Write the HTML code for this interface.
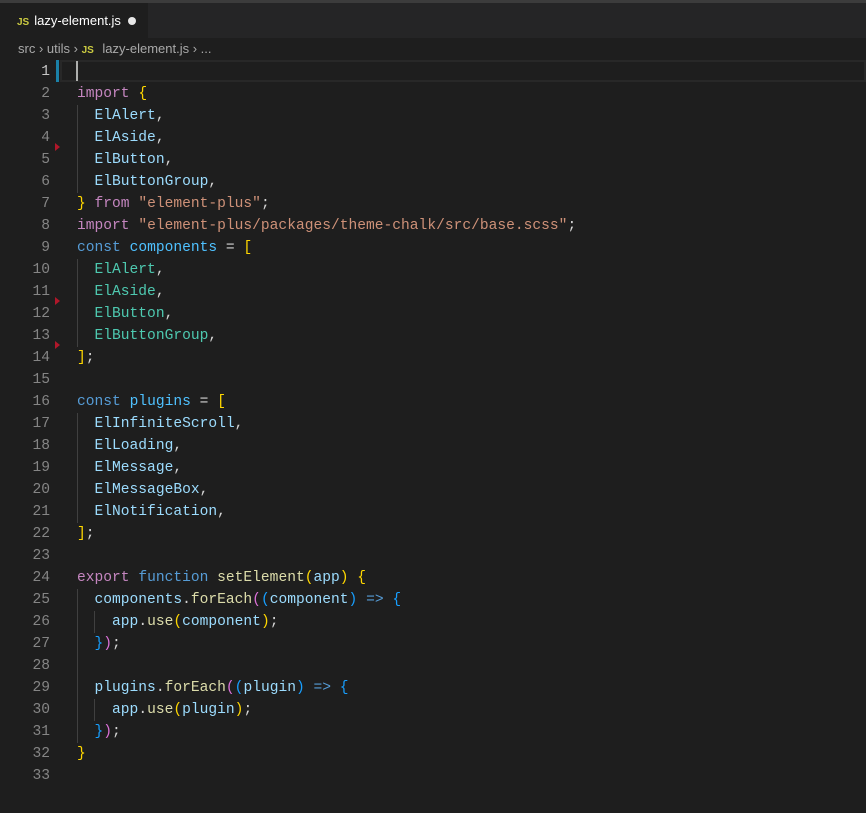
<!DOCTYPE html>
<html><head><meta charset="utf-8"><style>
*{margin:0;padding:0;box-sizing:border-box}
body{width:866px;height:813px;background:#1e1e1e;overflow:hidden;position:relative;font-family:"Liberation Sans",sans-serif}
.top{position:absolute;left:0;top:0;width:866px;height:3px;background:#3c3c3c}
.tabs{position:absolute;left:0;top:3px;width:866px;height:35px;background:#252526}
.tab{position:absolute;left:0;top:0;width:148px;height:35px;background:#1e1e1e;color:#fff;font-size:13px;line-height:35px;padding-left:17px}
.js{color:#cbcb41;font-weight:bold;font-size:10px;margin-right:5px;letter-spacing:0}
.dot{position:absolute;left:128px;top:14px;width:8px;height:8px;border-radius:50%;background:#e8e8e8}
.bc{position:absolute;left:18px;top:40px;color:#a9a9a9;font-size:13px;line-height:18px}
.bc .js{font-size:10px}
.code{position:absolute;left:0;top:61px;font-family:"Liberation Mono",monospace;font-size:14.6px;line-height:22px;white-space:pre}
.ln{position:absolute;left:0;width:50px;text-align:right;color:#858585}
.tx{position:absolute;left:77px;color:#d4d4d4}
.cur{position:absolute;left:60px;top:60px;width:806px;height:22px;border:2px solid #282828}
.k{color:#c586c0}.b{color:#569cd6}.v{color:#9cdcfe}.c{color:#4fc1ff}.t{color:#4ec9b0}.s{color:#ce9178}.f{color:#dcdcaa}.y{color:#ffd700}.p{color:#da70d6}.q{color:#179fff}
.g{position:absolute;width:1px;background:#404040}
.tri{position:absolute;left:55px;width:0;height:0;border-top:4px solid transparent;border-bottom:4px solid transparent;border-left:5px solid #b0172a}
</style></head><body>
<div class="top"></div>
<div class="tabs"><div class="tab"><span class="js">JS</span>lazy-element.js<div class="dot"></div></div></div>
<div class="bc">src › utils › <span class="js">JS</span> lazy-element.js › ...</div>
<div class="cur"></div>
<div style="position:absolute;left:56px;top:60px;width:3px;height:22px;background:#1b81a8"></div>
<div style="position:absolute;left:76px;top:61px;width:2px;height:20px;background:#aeafad"></div>
<div class="tri" style="top:143px"></div>
<div class="tri" style="top:297px"></div>
<div class="tri" style="top:341px"></div>
<div class="g" style="left:77px;top:105px;height:88px"></div>
<div class="g" style="left:77px;top:259px;height:88px"></div>
<div class="g" style="left:77px;top:413px;height:110px"></div>
<div class="g" style="left:77px;top:589px;height:154px"></div>
<div class="g" style="left:94px;top:611px;height:22px"></div>
<div class="g" style="left:94px;top:699px;height:22px"></div>
<div class="code">
<div class="ln" style="top:0;color:#c6c6c6">1</div>
<div class="ln" style="top:22px">2</div><div class="ln" style="top:44px">3</div><div class="ln" style="top:66px">4</div><div class="ln" style="top:88px">5</div><div class="ln" style="top:110px">6</div><div class="ln" style="top:132px">7</div><div class="ln" style="top:154px">8</div><div class="ln" style="top:176px">9</div><div class="ln" style="top:198px">10</div><div class="ln" style="top:220px">11</div><div class="ln" style="top:242px">12</div><div class="ln" style="top:264px">13</div><div class="ln" style="top:286px">14</div><div class="ln" style="top:308px">15</div><div class="ln" style="top:330px">16</div><div class="ln" style="top:352px">17</div><div class="ln" style="top:374px">18</div><div class="ln" style="top:396px">19</div><div class="ln" style="top:418px">20</div><div class="ln" style="top:440px">21</div><div class="ln" style="top:462px">22</div><div class="ln" style="top:484px">23</div><div class="ln" style="top:506px">24</div><div class="ln" style="top:528px">25</div><div class="ln" style="top:550px">26</div><div class="ln" style="top:572px">27</div><div class="ln" style="top:594px">28</div><div class="ln" style="top:616px">29</div><div class="ln" style="top:638px">30</div><div class="ln" style="top:660px">31</div><div class="ln" style="top:682px">32</div><div class="ln" style="top:704px">33</div>
<div class="tx" style="top:22px"><span class="k">import</span> <span class="y">{</span></div>
<div class="tx" style="top:44px">  <span class="v">ElAlert</span>,</div>
<div class="tx" style="top:66px">  <span class="v">ElAside</span>,</div>
<div class="tx" style="top:88px">  <span class="v">ElButton</span>,</div>
<div class="tx" style="top:110px">  <span class="v">ElButtonGroup</span>,</div>
<div class="tx" style="top:132px"><span class="y">}</span> <span class="k">from</span> <span class="s">"element-plus"</span>;</div>
<div class="tx" style="top:154px"><span class="k">import</span> <span class="s">"element-plus/packages/theme-chalk/src/base.scss"</span>;</div>
<div class="tx" style="top:176px"><span class="b">const</span> <span class="c">components</span> = <span class="y">[</span></div>
<div class="tx" style="top:198px">  <span class="t">ElAlert</span>,</div>
<div class="tx" style="top:220px">  <span class="t">ElAside</span>,</div>
<div class="tx" style="top:242px">  <span class="t">ElButton</span>,</div>
<div class="tx" style="top:264px">  <span class="t">ElButtonGroup</span>,</div>
<div class="tx" style="top:286px"><span class="y">]</span>;</div>
<div class="tx" style="top:330px"><span class="b">const</span> <span class="c">plugins</span> = <span class="y">[</span></div>
<div class="tx" style="top:352px">  <span class="v">ElInfiniteScroll</span>,</div>
<div class="tx" style="top:374px">  <span class="v">ElLoading</span>,</div>
<div class="tx" style="top:396px">  <span class="v">ElMessage</span>,</div>
<div class="tx" style="top:418px">  <span class="v">ElMessageBox</span>,</div>
<div class="tx" style="top:440px">  <span class="v">ElNotification</span>,</div>
<div class="tx" style="top:462px"><span class="y">]</span>;</div>
<div class="tx" style="top:506px"><span class="k">export</span> <span class="b">function</span> <span class="f">setElement</span><span class="y">(</span><span class="v">app</span><span class="y">)</span> <span class="y">{</span></div>
<div class="tx" style="top:528px">  <span class="v">components</span>.<span class="f">forEach</span><span class="p">(</span><span class="q">(</span><span class="v">component</span><span class="q">)</span> <span class="b">=&gt;</span> <span class="q">{</span></div>
<div class="tx" style="top:550px">    <span class="v">app</span>.<span class="f">use</span><span class="y">(</span><span class="v">component</span><span class="y">)</span>;</div>
<div class="tx" style="top:572px">  <span class="q">}</span><span class="p">)</span>;</div>
<div class="tx" style="top:616px">  <span class="v">plugins</span>.<span class="f">forEach</span><span class="p">(</span><span class="q">(</span><span class="v">plugin</span><span class="q">)</span> <span class="b">=&gt;</span> <span class="q">{</span></div>
<div class="tx" style="top:638px">    <span class="v">app</span>.<span class="f">use</span><span class="y">(</span><span class="v">plugin</span><span class="y">)</span>;</div>
<div class="tx" style="top:660px">  <span class="q">}</span><span class="p">)</span>;</div>
<div class="tx" style="top:682px"><span class="y">}</span></div>
</div>
</body></html>
